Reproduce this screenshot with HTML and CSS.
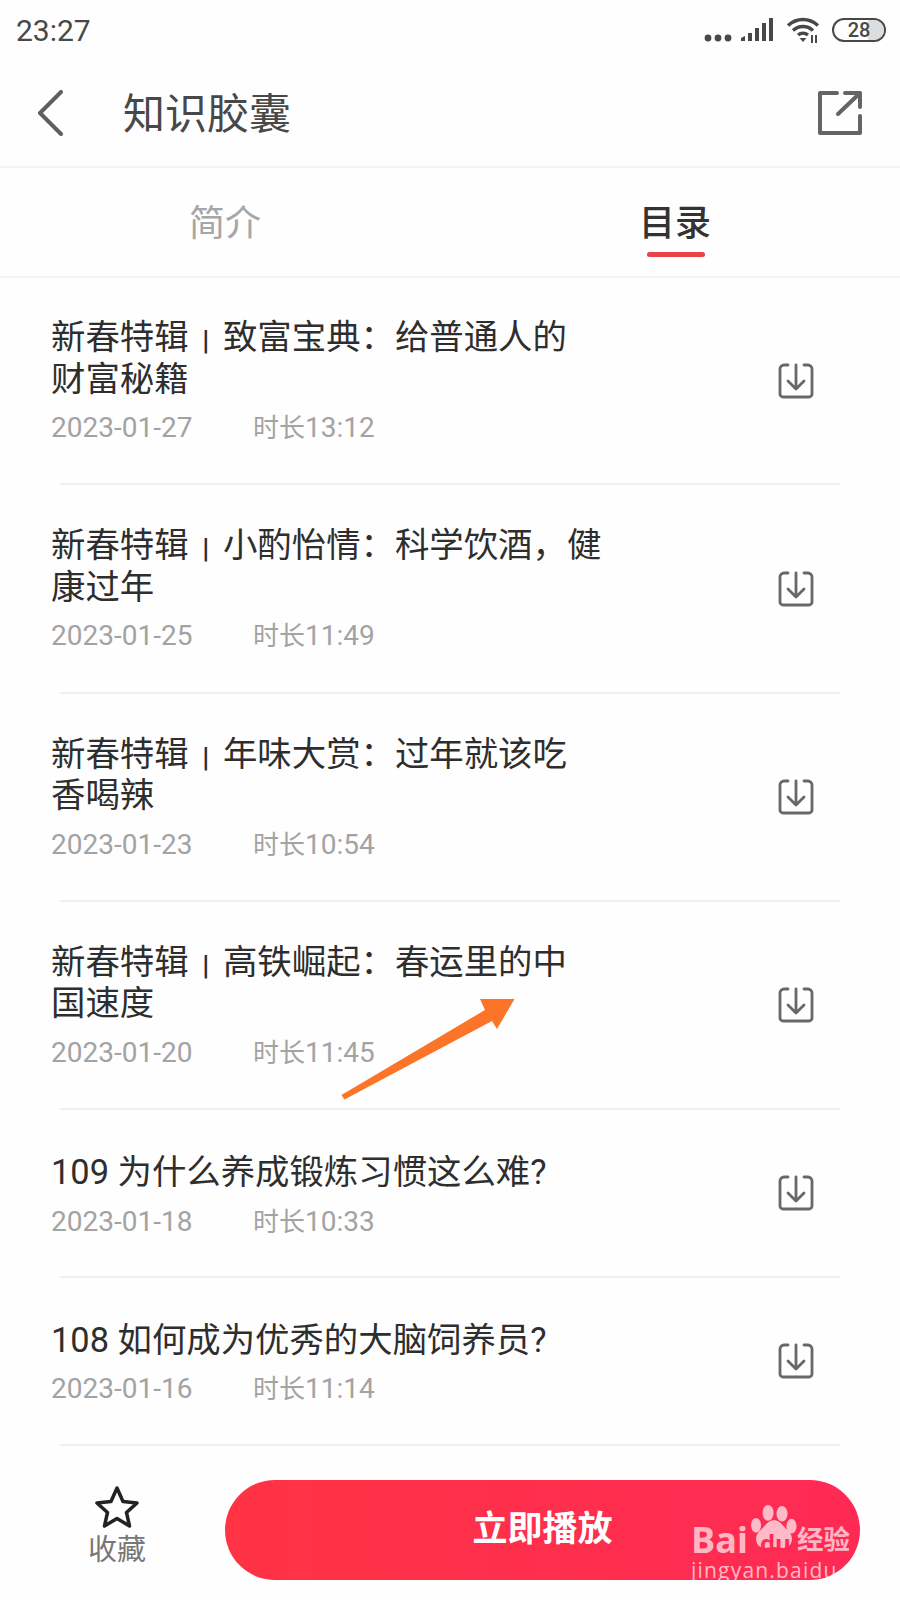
FILE: index.html
```html
<!DOCTYPE html>
<html lang="zh-CN">
<head>
<meta charset="utf-8">
<title>知识胶囊</title>
<link rel="stylesheet" href="styles.css">
</head>
<body>
<div class="page">

  <div class="status">
    <span class="clock">23:27</span>
    <div class="status-icons">
      <svg class="ic-dots" width="28" height="8" viewBox="0 0 28 8"><circle cx="4" cy="4" r="3.4"/><circle cx="14" cy="4" r="3.4"/><circle cx="24" cy="4" r="3.4"/></svg>
      <svg class="ic-signal" width="32" height="24" viewBox="0 0 32 24"><path d="M0 23v-3l4-2v5zM7 23v-8h4v8zM14 23V10h4v13zM21 23V5h4v18zM28 23V0h4v23z"/></svg>
      <svg class="ic-wifi" width="34" height="26" viewBox="0 0 34 26"><path class="wifi-arc" d="M2 8.500C11 .5 23 .5 32 8.500M7 13.500C13 8.300 21 8.300 27 13.500M12 18c3-2.400 7-2.400 10 0"/><path d="M13.500 21h7l-3.500 4zM25 18h2v8h-2zM29 18h2v8h-2z"/></svg>
      <div class="battery"><span class="battery-fill"></span><span class="battery-num">28</span></div>
    </div>
  </div>

  <header class="topbar">
    <svg class="back" width="26" height="46" viewBox="0 0 26 46"><path d="M24 2 3 23l21 21"/></svg>
    <h1 class="topbar-title">知识胶囊</h1>
    <svg class="share" width="46" height="46" viewBox="0 0 46 46"><path d="M20 3H3v40h40V26"/><path d="M21 24 43 3M28 3h15v14"/></svg>
  </header>

  <nav class="tabs">
    <div class="tab">简介</div>
    <div class="tab tab-on">目录</div>
  </nav>

  <main class="list">
    <div class="row">
      <div class="row-text">
        <div class="row-title">新春特辑<span class="sep">|</span>致富宝典：给普通人的<br>财富秘籍</div>
        <div class="row-meta"><span class="row-date">2023-01-27</span><span><span class="row-cn">时长</span>13:12</span></div>
      </div>
      <svg class="dl" width="36" height="36" viewBox="0 0 36 36"><path d="M10 2H6a4 4 0 0 0-4 4v25a3 3 0 0 0 3 3h26a3 3 0 0 0 3-3V6a4 4 0 0 0-4-4h-4"/><path d="M18 2v24M10 18l8 8 8-8"/></svg>
    </div>
    <div class="row">
      <div class="row-text">
        <div class="row-title">新春特辑<span class="sep">|</span>小酌怡情：科学饮酒，健<br>康过年</div>
        <div class="row-meta"><span class="row-date">2023-01-25</span><span><span class="row-cn">时长</span>11:49</span></div>
      </div>
      <svg class="dl" width="36" height="36" viewBox="0 0 36 36"><path d="M10 2H6a4 4 0 0 0-4 4v25a3 3 0 0 0 3 3h26a3 3 0 0 0 3-3V6a4 4 0 0 0-4-4h-4"/><path d="M18 2v24M10 18l8 8 8-8"/></svg>
    </div>
    <div class="row">
      <div class="row-text">
        <div class="row-title">新春特辑<span class="sep">|</span>年味大赏：过年就该吃<br>香喝辣</div>
        <div class="row-meta"><span class="row-date">2023-01-23</span><span><span class="row-cn">时长</span>10:54</span></div>
      </div>
      <svg class="dl" width="36" height="36" viewBox="0 0 36 36"><path d="M10 2H6a4 4 0 0 0-4 4v25a3 3 0 0 0 3 3h26a3 3 0 0 0 3-3V6a4 4 0 0 0-4-4h-4"/><path d="M18 2v24M10 18l8 8 8-8"/></svg>
    </div>
    <div class="row">
      <div class="row-text">
        <div class="row-title">新春特辑<span class="sep">|</span>高铁崛起：春运里的中<br>国速度</div>
        <div class="row-meta"><span class="row-date">2023-01-20</span><span><span class="row-cn">时长</span>11:45</span></div>
      </div>
      <svg class="dl" width="36" height="36" viewBox="0 0 36 36"><path d="M10 2H6a4 4 0 0 0-4 4v25a3 3 0 0 0 3 3h26a3 3 0 0 0 3-3V6a4 4 0 0 0-4-4h-4"/><path d="M18 2v24M10 18l8 8 8-8"/></svg>
    </div>
    <div class="row row-one">
      <div class="row-text">
        <div class="row-title">109 为什么养成锻炼习惯这么难?</div>
        <div class="row-meta"><span class="row-date">2023-01-18</span><span><span class="row-cn">时长</span>10:33</span></div>
      </div>
      <svg class="dl" width="36" height="36" viewBox="0 0 36 36"><path d="M10 2H6a4 4 0 0 0-4 4v25a3 3 0 0 0 3 3h26a3 3 0 0 0 3-3V6a4 4 0 0 0-4-4h-4"/><path d="M18 2v24M10 18l8 8 8-8"/></svg>
    </div>
    <div class="row row-one">
      <div class="row-text">
        <div class="row-title">108 如何成为优秀的大脑饲养员?</div>
        <div class="row-meta"><span class="row-date">2023-01-16</span><span><span class="row-cn">时长</span>11:14</span></div>
      </div>
      <svg class="dl" width="36" height="36" viewBox="0 0 36 36"><path d="M10 2H6a4 4 0 0 0-4 4v25a3 3 0 0 0 3 3h26a3 3 0 0 0 3-3V6a4 4 0 0 0-4-4h-4"/><path d="M18 2v24M10 18l8 8 8-8"/></svg>
    </div>
  </main>

  <footer class="bottom">
    <div class="fav">
      <svg width="46" height="44" viewBox="0 0 46 44"><path d="M23 3l6 13.500 14 1.500-10.500 9.500L35.500 41 23 33.500 10.500 41l3-13.500L3 18l14-1.500z"/></svg>
      <span>收藏</span>
    </div>
    <div class="play"><span>立即播放</span></div>
  </footer>

  <svg class="arrow" width="900" height="1600" viewBox="0 0 900 1600"><path d="M341.500 1095 485 1010 480 999H514.500L497 1029 492 1021 344.500 1099.500z"/></svg>

  <div class="mark">
    <div class="mark-logo">
      <span class="mark-bai">Bai</span>
      <div class="mark-paw">
        <svg width="46" height="51" viewBox="0 0 50 52"><ellipse cx="18.500" cy="9" rx="6" ry="8.500"/><ellipse cx="33.700" cy="10" rx="6" ry="8.500"/><ellipse cx="5.500" cy="22.500" rx="5.500" ry="8"/><ellipse cx="44" cy="23.500" rx="5.500" ry="8"/><path d="M25 17c7 0 10 7 16 12 6 6 4 17-4 18-4 .5-8-1-12-1s-8 1.500-12 1C5 46 3 35 9 29c6-5 9-12 16-12z"/></svg>
        <span class="mark-du">du</span>
      </div>
      <span class="mark-cn">经验</span>
    </div>
    <div class="mark-url">jingyan.baidu.com</div>
  </div>

</div>
</body>
</html>
```

FILE: styles.css
```css
* { box-sizing: border-box; }
html, body { margin: 0; padding: 0; }
body { background: #fff; font-family: Roboto, "Noto Sans CJK SC", sans-serif; color: #333; }

.page { position: relative; width: 900px; height: 1600px; overflow: hidden; display: flex; flex-direction: column; background: #fefefe; }

/* status bar */
.status { height: 60px; flex: none; display: flex; justify-content: space-between; align-items: center; padding: 0 14px 0 16px; }
.clock { font-size: 30px; color: #484848; }
.status-icons { display: flex; align-items: center; }
.status-icons svg { fill: #484848; display: block; }
.ic-dots { margin: 16px 9px 0 0; }
.ic-signal { margin: 0 13px 0 0; }
.ic-wifi { margin: 0 12px 0 0; }
.wifi-arc { fill: none; stroke: #484848; stroke-width: 3.5; }
.battery { position: relative; width: 54px; height: 24px; border: 2.500px solid #484848; border-radius: 12px; display: flex; align-items: center; justify-content: center; overflow: hidden; }
.battery-fill { position: absolute; right: 0; top: 0; bottom: 0; width: 16px; background: #ddd; }
.battery-num { position: relative; font-size: 20px; font-weight: 500; color: #484848; line-height: 1; }

/* top bar */
.topbar { height: 108px; flex: none; display: flex; align-items: center; padding: 0 37px; border-bottom: 2px solid #f4f4f4; }
.back { fill: none; stroke: #606060; stroke-width: 4; stroke-linecap: round; stroke-linejoin: round; flex: none; }
.topbar-title { margin: 0 0 0 60px; padding-top: 3px; flex: 1; font-size: 42px; font-weight: 400; color: #484848; line-height: 46px; }
.share { fill: none; stroke: #646464; stroke-width: 4; stroke-linecap: round; stroke-linejoin: round; flex: none; }

/* tabs */
.tabs { height: 110px; flex: none; display: flex; border-bottom: 2px solid #f4f4f4; }
.tab { position: relative; width: 450px; text-align: center; font-size: 36px; line-height: 50px; padding-top: 31px; color: #a6a6a6; }
.tab-on { color: #333; font-weight: 500; }
.tab-on::after { content: ""; position: absolute; left: 197px; top: 84px; width: 58px; height: 5px; border-radius: 3px; background: #e8434a; }

/* list */
.list { flex: 1; min-height: 0; margin-top: -1px; }
.row { display: flex; align-items: center; justify-content: space-between; margin: 0 60px; padding: 40px 26px 39.100px 0; border-bottom: 2px solid #f0f0f0; }
.row-one { padding-top: 42px; padding-bottom: 38.100px; }
.row-one .dl { margin-bottom: 4px; }
.row-text { margin-left: -9px; }
.row-title { font-size: 34.400px; line-height: 41.600px; color: #2e2e2e; }
.sep { display: inline-block; width: 34.400px; text-align: center; font-size: 28px; font-weight: 700; vertical-align: -1px; line-height: 1; }
.row-meta { margin-top: 12px; font-size: 28px; line-height: 32px; color: #a3a3a3; display: flex; }
.row-date { width: 202px; }
.row-cn { font-size: 26px; }
.dl { fill: none; stroke: #686868; stroke-width: 2.800; stroke-linecap: round; stroke-linejoin: round; flex: none; }

/* bottom */
.bottom { height: 155px; flex: none; display: flex; align-items: flex-start; padding: 35px 40px 0 88px; }
.fav { width: 58px; flex: none; display: flex; flex-direction: column; align-items: center; gap: 4px; margin-top: 5px; font-size: 29px; line-height: 34px; color: #777; }
.fav svg { fill: none; stroke: #222; stroke-width: 3.500; stroke-linejoin: round; display: block; }
.play { margin-left: 79px; flex: 1; height: 100px; border-radius: 50px; background: linear-gradient(90deg, #ff3344, #fe2a55); color: #fff; font-size: 35px; font-weight: 700; line-height: 100px; display: flex; justify-content: center; }

/* over the content */
.arrow { position: absolute; left: 0; top: 0; fill: #fb7427; pointer-events: none; }
.mark { position: absolute; left: 691px; top: 1503px; width: 165px; color: rgba(255, 255, 255, .68); }
.mark-logo { display: flex; align-items: flex-end; height: 52px; white-space: nowrap; }
.mark-bai { font-family: "Open Sans", sans-serif; font-weight: 700; font-size: 36px; line-height: 36px; margin-bottom: -3px; }
.mark-paw { position: relative; width: 46px; height: 52px; margin: 0 0 0 3px; flex: none; }
.mark-paw svg { fill: #fff; opacity: .68; display: block; }
.mark-du { position: absolute; left: 9px; bottom: 0; font-family: "Open Sans", sans-serif; font-size: 24px; font-weight: 700; line-height: 24px; color: #fe2a55; }
.mark-cn { font-size: 26.500px; font-weight: 700; line-height: 30px; flex: none; }
.mark-url { font-family: "Open Sans", sans-serif; font-size: 21px; line-height: 24px; letter-spacing: 1.200px; white-space: nowrap; margin-top: 3px; }
```
